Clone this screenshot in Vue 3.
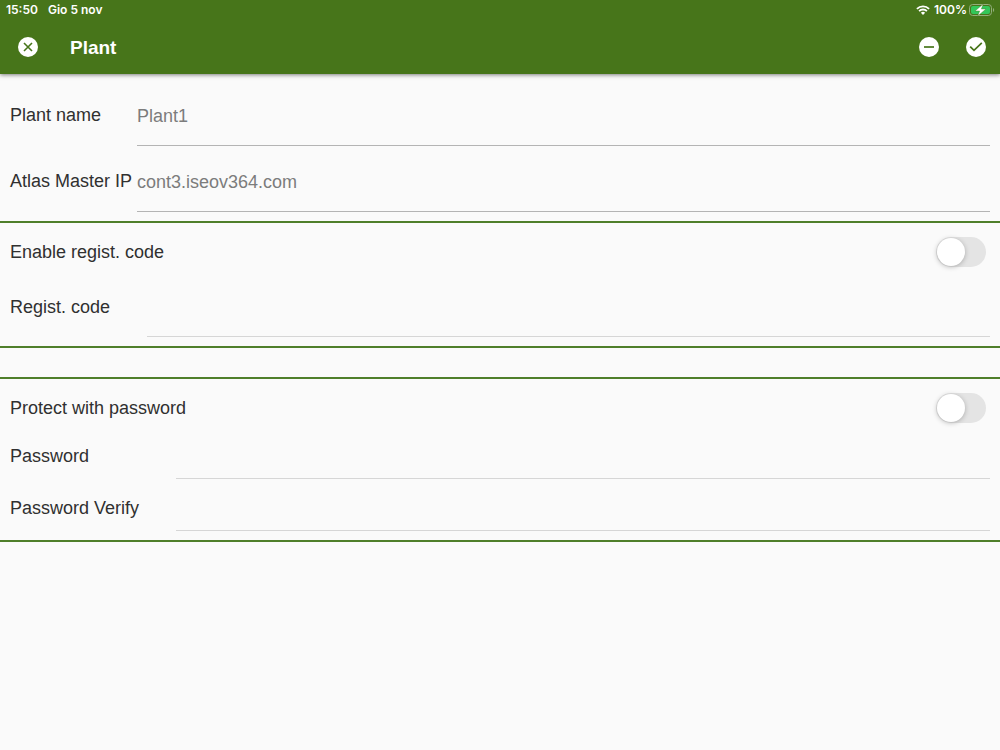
<script setup>
import { ref } from 'vue'

const plantName = ref('')
const masterIp = ref('')
const enableCode = ref(false)
const code = ref('')
const protect = ref(false)
const password = ref('')
const passwordVerify = ref('')
</script>

<template>
  <div class="page">
    <header class="header">
      <div class="status">
        <span>15:50</span>
        <span class="date">Gio 5 nov</span>
        <span class="spacer"></span>
        <svg class="wifi" width="14" height="10" viewBox="0 0 14 10" aria-hidden="true">
          <g fill="none" stroke="#fff" stroke-width="1.8">
            <path d="M0.9 3.8A8.7 8.7 0 0 1 13.1 3.8" />
            <path d="M3.1 6.1A5.5 5.5 0 0 1 10.9 6.1" />
          </g>
          <path d="M7 9.9L4.9 7.8A3 3 0 0 1 9.1 7.8Z" fill="#fff" />
        </svg>
        <span>100%</span>
        <svg class="battery" width="26" height="12" viewBox="0 0 26 12" aria-hidden="true">
          <rect x="0.5" y="0.5" width="22" height="11" rx="3.2" fill="none" stroke="#93ae7c" />
          <rect x="2" y="2" width="19" height="8" rx="2" fill="#33c759" />
          <path d="M24 4V8C25.6 7.4 25.6 4.6 24 4Z" fill="#93ae7c" />
          <path d="M14.2 0L6 7H10.6L8.8 12L17 5H12.4Z" fill="#fff" stroke="#47751a" stroke-width="0.4" />
        </svg>
      </div>
      <div class="toolbar">
        <button class="icon" type="button" aria-label="Close">
          <svg width="20" height="20" viewBox="0 0 20 20">
            <circle cx="10" cy="10" r="10" fill="#fff" />
            <path d="M6 6L14 14M14 6L6 14" fill="none" stroke="#47751a" stroke-width="1.6" />
          </svg>
        </button>
        <h1>Plant</h1>
        <span class="spacer"></span>
        <button class="icon" type="button" aria-label="Remove">
          <svg width="20" height="20" viewBox="0 0 20 20">
            <circle cx="10" cy="10" r="10" fill="#fff" />
            <path d="M5 10H15" fill="none" stroke="#47751a" stroke-width="1.7" />
          </svg>
        </button>
        <button class="icon confirm" type="button" aria-label="Confirm">
          <svg width="20" height="20" viewBox="0 0 20 20">
            <circle cx="10" cy="10" r="10" fill="#fff" />
            <path d="M4.2 9.6L8 13.4L15.8 5.8" fill="none" stroke="#47751a" stroke-width="1.7" />
          </svg>
        </button>
      </div>
    </header>

    <main>
      <section class="group general">
        <div class="row tall">
          <label for="name">Plant name</label>
          <input id="name" v-model="plantName" type="text" placeholder="Plant1" />
        </div>
        <div class="row tall">
          <label for="ip">Atlas Master IP</label>
          <input id="ip" v-model="masterIp" type="text" placeholder="cont3.iseov364.com" />
        </div>
      </section>

      <section class="group registration">
        <div class="row toggle">
          <label for="enable">Enable regist. code</label>
          <input id="enable" v-model="enableCode" class="switch" type="checkbox" role="switch" />
        </div>
        <div class="row code">
          <label for="code">Regist. code</label>
          <input id="code" v-model="code" type="text" :disabled="!enableCode" />
        </div>
      </section>

      <section class="group protection">
        <div class="row toggle">
          <label for="protect">Protect with password</label>
          <input id="protect" v-model="protect" class="switch" type="checkbox" role="switch" />
        </div>
        <div class="row secret">
          <label for="password">Password</label>
          <input id="password" v-model="password" type="password" :disabled="!protect" />
        </div>
        <div class="row secret">
          <label for="verify">Password Verify</label>
          <input id="verify" v-model="passwordVerify" type="password" :disabled="!protect" />
        </div>
      </section>
    </main>
  </div>
</template>

<style>
body {
  background: #fafafa;
}
</style>

<style scoped>
.page {
  min-height: 100vh;
  background: #fafafa;
  color: #303030;
  font-family: "Liberation Sans", Arial, sans-serif;
  font-size: 18px;
  line-height: 20px;
}

.header {
  background: #47751a;
  color: #fff;
  box-shadow: 0 1px 4px rgba(0, 0, 0, 0.5);
}

.status {
  display: flex;
  align-items: center;
  box-sizing: border-box;
  height: 20px;
  padding: 0 5px 1px 6px;
  font-family: Inter, sans-serif;
  font-size: 12px;
  font-weight: 600;
  line-height: 18px;
}

.date {
  margin-left: 10px;
}

.spacer {
  flex: 1;
}

.wifi {
  margin-right: 4px;
}

.battery {
  margin-left: 2px;
}

.toolbar {
  display: flex;
  align-items: center;
  height: 54px;
  padding: 0 14px 0 18px;
}

.icon {
  display: block;
  padding: 0;
  border: 0;
  background: none;
}

.icon svg {
  display: block;
}

.confirm {
  margin-left: 27px;
}

h1 {
  margin: 0 0 0 32px;
  padding-top: 2px;
  font-size: 19px;
  line-height: 24px;
}

.group {
  padding-bottom: 9px;
  border-bottom: 2px solid #4f7f2a;
}

.row {
  display: flex;
  align-items: center;
  padding: 0 10px;
}

label {
  flex: none;
  white-space: nowrap;
}

input[type="text"],
input[type="password"] {
  flex: 1;
  min-width: 0;
  align-self: stretch;
  box-sizing: border-box;
  padding: 0;
  border: 0;
  border-bottom: 1px solid #b4b4b4;
  border-radius: 0;
  outline: 0;
  background: none;
  color: #303030;
  font: inherit;
}

input:disabled {
  border-color: #d6d6d6;
}

input::placeholder {
  color: #7c7c7c;
  opacity: 1;
}

.general {
  padding-top: 6px;
}

.tall {
  height: 66px;
}

.tall label {
  width: 127px;
  padding-top: 4px;
}

.tall input[type="text"] {
  padding-top: 6px;
}

.toggle {
  height: 58px;
  justify-content: space-between;
  padding-right: 14px;
}

.code {
  height: 56px;
}

.code label {
  width: 137px;
  padding-bottom: 4px;
}

.protection {
  margin-top: 29px;
  border-top: 2px solid #4f7f2a;
}

.secret {
  height: 42px;
}

.secret + .secret {
  margin-top: 10px;
}

.secret label {
  width: 166px;
  padding-bottom: 4px;
}

.switch {
  appearance: none;
  display: flex;
  width: 50px;
  height: 30px;
  margin: 0;
  padding: 1px;
  box-sizing: border-box;
  border-radius: 15px;
  background: #e4e4e4;
}

.switch::before {
  content: "";
  width: 28px;
  height: 28px;
  border-radius: 50%;
  background: #fff;
  box-shadow: 0 1px 5px rgba(0, 0, 0, 0.25);
}

.switch:checked {
  justify-content: flex-end;
  background: #47751a;
}
</style>
